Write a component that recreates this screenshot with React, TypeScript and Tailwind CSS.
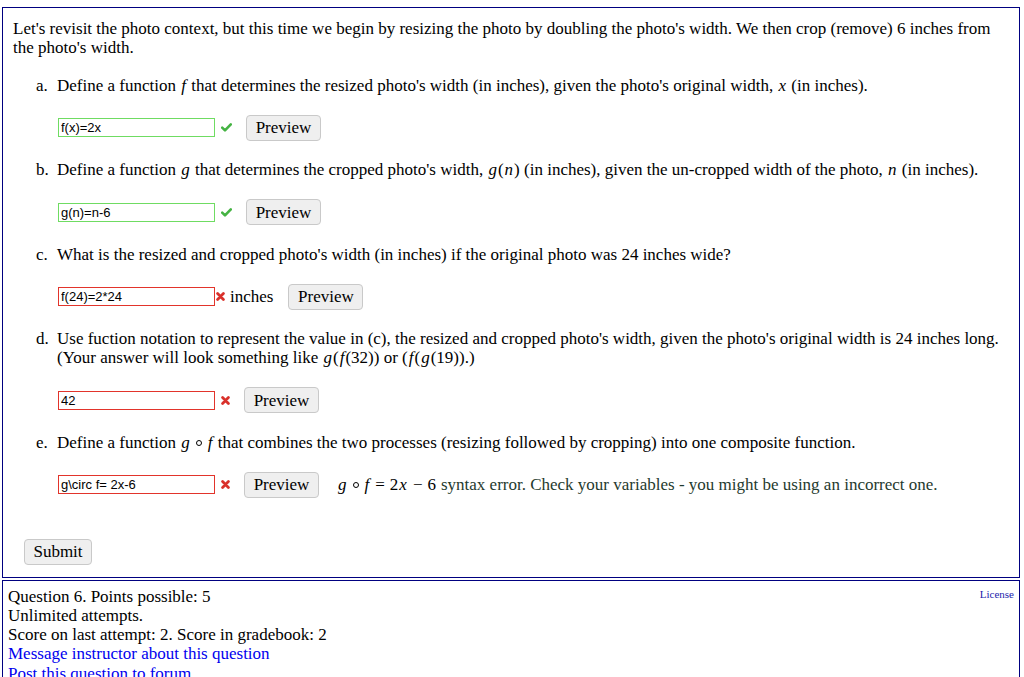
import React from 'react';

function Check() {
  return (
    <svg width="11" height="9" viewBox="0 0 11 9" className="ml-[6px] shrink-0">
      <path d="M1.2 4.6 L4 7.4 L9.8 1.4" fill="none" stroke="#45b343" strokeWidth="2.6" strokeLinecap="round" strokeLinejoin="round" />
    </svg>
  );
}

function Cross({ className }: { className: string }) {
  return (
    <svg width="9" height="9" viewBox="0 0 9 9" className={`shrink-0 ${className}`}>
      <path d="M1.6 1.6 L7.4 7.4 M7.4 1.6 L1.6 7.4" fill="none" stroke="#d9312b" strokeWidth="2.8" strokeLinecap="round" />
    </svg>
  );
}

function M({ children }: { children: React.ReactNode }) {
  return <i className="px-[1px]">{children}</i>;
}

// composition ring, drawn as a small hollow circle
function Ring() {
  return <span className="mx-[5px] inline-block w-[6px] h-[6px] rounded-full border border-black align-[2px]" />;
}

function AnswerBox({ value, ok }: { value: string; ok: boolean }) {
  return (
    <input
      readOnly
      value={value}
      className={`ml-[1px] w-[157px] h-[19px] px-[2px] bg-white font-['Liberation_Sans',Arial,sans-serif] text-[13px] leading-[17px] text-black outline-none border ${
        ok ? 'border-[#6fdc62]' : 'border-[#e2342b]'
      }`}
    />
  );
}

function PreviewBtn({ className = '' }: { className?: string }) {
  return (
    <button className={`h-[26px] w-[75px] shrink-0 rounded-[4px] border border-[#c9c9c9] bg-[#efefef] text-[17px] leading-[19px] ${className}`}>
      Preview
    </button>
  );
}

function Item({ label, children, row }: { label: string; children: React.ReactNode; row: React.ReactNode }) {
  return (
    <li className="flex mb-[19.5px]">
      <span className="w-[21px] shrink-0">{label}</span>
      <div className="flex-1">
        <div>{children}</div>
        <div className="mt-[20px] h-[26px] flex items-center">{row}</div>
      </div>
    </li>
  );
}

export default function App() {
  return (
    <div className="min-h-screen bg-white pt-[7px] font-['Liberation_Serif','Times_New_Roman',serif] text-[17px] leading-[19px] text-black">
      <div className="ml-[2px] mr-[4px] border border-[#000080] pl-[10px] pr-[9px] pt-[11px] pb-[12px]">
        <p className="pr-[8px]">
          Let's revisit the photo context, but this time we begin by resizing the photo by doubling the photo's width. We then crop (remove) 6 inches from the photo's width.
        </p>
        <ol className="mt-[18.5px] pl-[23px]">
          <Item
            label="a."
            row={
              <>
                <AnswerBox value="f(x)=2x" ok />
                <Check />
                <PreviewBtn className="ml-[14px]" />
              </>
            }
          >
            Define a function <M>f</M> that determines the resized photo's width (in inches), given the photo's original width, <M>x</M> (in inches).
          </Item>
          <Item
            label="b."
            row={
              <>
                <AnswerBox value="g(n)=n-6" ok />
                <Check />
                <PreviewBtn className="ml-[14px]" />
              </>
            }
          >
            Define a function <M>g</M> that determines the cropped photo's width, <M>g</M>(<M>n</M>) (in inches), given the un-cropped width of the photo, <M>n</M> (in inches).
          </Item>
          <Item
            label="c."
            row={
              <>
                <AnswerBox value="f(24)=2*24" ok={false} />
                <Cross className="ml-[1px]" />
                <span className="ml-[5px]">inches</span>
                <PreviewBtn className="ml-[15px]" />
              </>
            }
          >
            What is the resized and cropped photo's width (in inches) if the original photo was 24 inches wide?
          </Item>
          <Item
            label="d."
            row={
              <>
                <AnswerBox value="42" ok={false} />
                <Cross className="ml-[6px]" />
                <PreviewBtn className="ml-[14px]" />
              </>
            }
          >
            Use fuction notation to represent the value in (c), the resized and cropped photo's width, given the photo's original width is 24 inches long. (Your answer will look something like <M>g</M>(<M>f</M>(32)) or (<M>f</M>(<M>g</M>(19)).)
          </Item>
          <Item
            label="e."
            row={
              <>
                <AnswerBox value="g\circ f= 2x-6" ok={false} />
                <Cross className="ml-[6px]" />
                <PreviewBtn className="ml-[14px]" />
                <span className="ml-[18px] whitespace-nowrap">
                  <M>g</M>
                  <Ring />
                  <M>f</M>
                  <span className="mx-[5px]">=</span>2<M>x</M>
                  <span className="mx-[5px]">−</span>6
                </span>
                <span className="ml-[5px] text-[#1f3a2e] whitespace-nowrap">
                  syntax error. Check your variables - you might be using an incorrect one.
                </span>
              </>
            }
          >
            Define a function <M>g</M>
            <Ring />
            <M>f</M> that combines the two processes (resizing followed by cropping) into one composite function.
          </Item>
        </ol>
        <button className="ml-[11px] mt-[21.5px] h-[26px] w-[68px] rounded-[4px] border border-[#c9c9c9] bg-[#efefef] text-[17px] leading-[19px]">
          Submit
        </button>
      </div>
      <div className="mt-[2px] ml-[2px] mr-[4px] border border-[#000080] pl-[5px] pr-[5px] pt-[6px] flex justify-between leading-[19.25px]">
        <div>
          <div>Question 6. Points possible: 5</div>
          <div>Unlimited attempts.</div>
          <div>Score on last attempt: 2. Score in gradebook: 2</div>
          <div>
            <a className="text-[#0000ee]">Message instructor about this question</a>
          </div>
          <div>
            <a className="text-[#0000ee]">Post this question to forum</a>
          </div>
        </div>
        <a className="text-[11px] leading-[13px] text-[#1c1cad] mt-[1px]">License</a>
      </div>
    </div>
  );
}
